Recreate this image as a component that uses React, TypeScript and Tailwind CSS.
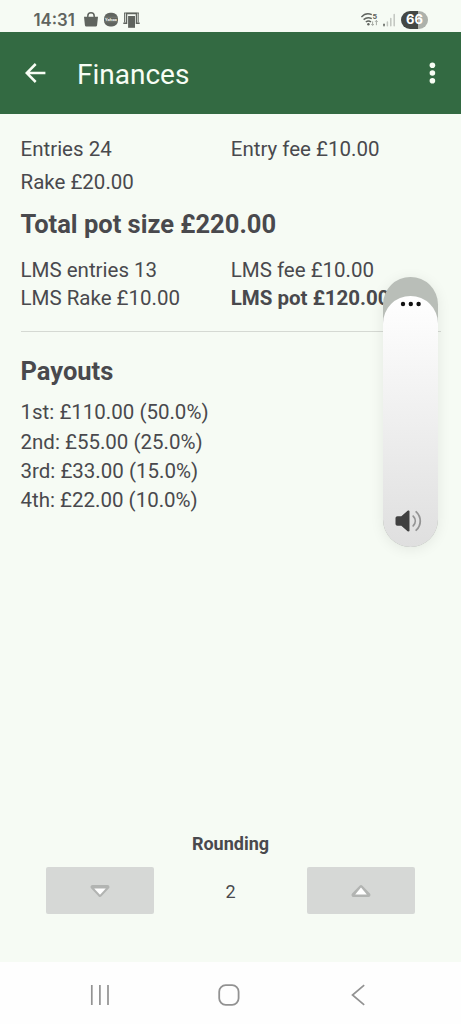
import { useState } from "react";

const payouts = [
  { place: "1st", amount: "£110.00", share: "50.0%" },
  { place: "2nd", amount: "£55.00", share: "25.0%" },
  { place: "3rd", amount: "£33.00", share: "15.0%" },
  { place: "4th", amount: "£22.00", share: "10.0%" },
];

function StatusBar() {
  return (
    <div className="flex h-8 shrink-0 items-center pt-[7px] pr-[33px] pl-[33.5px] text-[#60645f]">
      <span className="w-[50px] pt-px font-['Inter'] text-[16.8px] leading-none font-semibold whitespace-nowrap">14:31</span>
      <svg className="h-[15px] w-[14px]" viewBox="0 0 14 15">
        <path d="M3.8 5.5V4a3.2 3.2 0 0 1 6.4 0v1.5" fill="none" stroke="currentColor" strokeWidth="1.5" />
        <path d="M0 4.8h14l-.9 8.2c-.1 1-.8 1.6-1.8 1.6H2.7c-1 0-1.7-.6-1.8-1.6z" fill="currentColor" />
      </svg>
      <svg className="ml-[6px] h-[15px] w-[14px]" viewBox="0 0 14 15">
        <rect x="0" y="0.8" width="14" height="13.6" rx="6" fill="currentColor" />
        <path d="M.5 5.2h13M.5 9.8h13" stroke="#8c908b" strokeWidth=".5" />
        <text x="7" y="9" textAnchor="middle" fontSize="4.2" fontWeight="700" fontFamily="Roboto, sans-serif" fill="#f7fbf4">
          Yahoo
        </text>
      </svg>
      <svg className="ml-[5px] h-[16px] w-[17px]" viewBox="0 0 17 16">
        <path d="M.3 11.3h3.2V1.6h10v9.7h3.2" fill="none" stroke="currentColor" strokeWidth="1.5" />
        <path d="M1.5 1v9.5M15.3 1v9.5M1 1h15" stroke="currentColor" strokeWidth=".9" />
        <path d="M5.1 4h6.9v11.8H5.1z" fill="currentColor" />
      </svg>
      <div className="ml-auto flex items-center">
        <svg className="h-[15px] w-[18px]" viewBox="0 0 18 15" fill="none" stroke="currentColor">
          <path d="M.4 5C3.4 1.6 7.6 1.2 10.8 2.6M2.6 7.6C5 5.5 8 5.2 10.8 6.6M4.8 10c1.7-1.3 3.7-1.3 5.2.1" strokeWidth="1.4" />
          <circle cx="7.4" cy="12.2" r="1.2" fill="currentColor" stroke="none" />
          <path d="M11.6 9.4v4M10.3 12.1l1.3 1.3 1.3-1.3M15.4 13.2V8.4M14.1 9.8l1.3-1.4 1.3 1.4" stroke="#a5a9a3" strokeWidth="1" />
          <text x="11.4" y="7" fontSize="8" fontWeight="700" fontFamily="Roboto, sans-serif" fill="currentColor" stroke="none">
            5
          </text>
        </svg>
        <svg className="ml-[4px] h-[14px] w-[13px]" viewBox="0 0 13 14" strokeWidth="1.5" strokeLinecap="round">
          <path d="M1 11.2v1.5" stroke="currentColor" />
          <path d="M4.4 9v3.7M7.8 5.5v7.2M11.2 1.5v11.2" stroke="#c2c6c0" />
        </svg>
        <div className="ml-[5px] flex h-[18px] w-[27px] items-center justify-center rounded-full bg-linear-to-r from-[#444744] from-64% to-[#adb1ab] to-64% font-['Inter'] text-[13px] leading-none font-bold text-white">
          66
        </div>
      </div>
    </div>
  );
}

function AppBar() {
  return (
    <header className="flex h-[82px] shrink-0 items-center bg-[#336a42] pr-[25px] pl-[25px] text-[#f7fdf4]">
      <button aria-label="Back">
        <svg className="h-[20px] w-[21px]" viewBox="0 0 21 20" fill="none" stroke="currentColor" strokeWidth="2.5">
          <path d="M20.4 10H2M10.7 1 1.7 10l9 9" />
        </svg>
      </button>
      <h1 className="mt-[3px] ml-[31px] text-[28px] leading-none">Finances</h1>
      <button aria-label="More options" className="ml-auto">
        <svg className="h-[22px] w-[8px]" viewBox="0 0 8 22" fill="currentColor">
          <circle cx="4.4" cy="3.3" r="2.8" />
          <circle cx="4.4" cy="11" r="2.8" />
          <circle cx="4.4" cy="18.8" r="2.8" />
        </svg>
      </button>
    </header>
  );
}

function VolumeSlider() {
  return (
    <div className="absolute top-[277px] left-[383px] h-[270px] w-[55px] overflow-hidden rounded-full bg-[#b9beb8] shadow-[0_2px_14px_rgba(0,0,0,0.08)]">
      <div className="mt-[19px] flex h-[251px] flex-col items-center justify-between rounded-full bg-linear-to-b from-white to-[#dfdfdf] pt-[5px] pb-[15px]">
        <svg className="h-[6px] w-[22px]" viewBox="0 0 22 6" fill="#111">
          <circle cx="3" cy="3" r="2.2" />
          <circle cx="10.8" cy="3" r="2.2" />
          <circle cx="18.6" cy="3" r="2.2" />
        </svg>
        <svg className="mr-[4px] h-[22px] w-[28px]" viewBox="0 0 28 22">
          <path
            d="M2.5 6.2h3.8L12.6.8c.8-.6 1.9-.3 1.9.6v19.2c0 .9-1.1 1.2-1.9.6l-6.3-5.4H2.5c-1.2 0-2-.8-2-2V8.2c0-1.2.8-2 2-2z"
            fill="#404040"
          />
          <path d="M18.2 6.2c2.7 2.8 2.7 6.8 0 9.6M21.2 1.8c5.4 5 5.4 13.4 0 18.4" fill="none" stroke="#949494" strokeWidth="1.8" strokeLinecap="round" />
        </svg>
      </div>
    </div>
  );
}

function StepButton({ direction, onClick }: { direction: "down" | "up"; onClick: () => void }) {
  return (
    <button
      aria-label={direction === "down" ? "Decrease rounding" : "Increase rounding"}
      onClick={onClick}
      className="flex h-[47px] w-[108px] items-center justify-center rounded-[2px] bg-[#d6d8d6]"
    >
      {direction === "down" ? (
        <svg className="h-[16px] w-[22px]" viewBox="0 0 22 16">
          <path d="M3.5 4h15L11 12z" fill="#b2b4b2" stroke="#b2b4b2" strokeWidth="4" strokeLinejoin="round" />
          <path d="M5.2 5.6h11.6L11 11.8z" fill="#fff" />
        </svg>
      ) : (
        <svg className="h-[16px] w-[22px]" viewBox="0 0 22 16">
          <path d="M3.5 12h15L11 4.2z" fill="#b2b4b2" stroke="#b2b4b2" strokeWidth="4" strokeLinejoin="round" />
          <path d="M5.2 11.4h11.6L11 4.6z" fill="#fff" />
        </svg>
      )}
    </button>
  );
}

function NavBar() {
  return (
    <nav className="flex h-[62px] shrink-0 items-center bg-[#fefefe] pt-[4px] pr-[96px] pl-[90px] text-[#929292]">
      <svg className="h-[20px] w-[20px]" viewBox="0 0 20 20" stroke="currentColor" strokeWidth="1.7">
        <path d="M1.8 0v20M9.9 0v20M18 0v20" />
      </svg>
      <svg className="ml-[108px] h-[22px] w-[22px]" viewBox="0 0 22 22" fill="none" stroke="currentColor" strokeWidth="1.8">
        <rect x="1.2" y="1.2" width="19.4" height="19.6" rx="6.5" />
      </svg>
      <svg className="ml-auto h-[22px] w-[14px]" viewBox="0 0 14 22" fill="none" stroke="currentColor" strokeWidth="1.7">
        <path d="M13.2 1.2 1.5 11l11.7 9.8" />
      </svg>
    </nav>
  );
}

export default function App() {
  const [rounding, setRounding] = useState(2);

  return (
    <div className="relative flex h-[1024px] w-[461px] flex-col overflow-hidden bg-[#f6fbf4] font-['Roboto',sans-serif] text-[#49494d]">
      <StatusBar />
      <AppBar />

      <main className="flex flex-1 flex-col pr-[20px] pl-[20.5px] text-[20.5px]">
        <div className="mt-[19px] grid grid-cols-2 leading-[33px]">
          <span>Entries 24</span>
          <span>Entry fee £10.00</span>
          <span>Rake £20.00</span>
        </div>
        <h2 className="mt-[8px] text-[25.5px] leading-[34px] font-bold">Total pot size £220.00</h2>
        <div className="mt-[15px] grid grid-cols-2 leading-[28px] whitespace-nowrap">
          <span>LMS entries 13</span>
          <span>LMS fee £10.00</span>
          <span>LMS Rake £10.00</span>
          <span className="font-bold">LMS pot £120.00</span>
        </div>
        <hr className="mt-[19px] border-[#d5d9d3]" />

        <h2 className="mt-[22px] text-[25.5px] leading-[34px] font-bold">Payouts</h2>
        <ul className="mt-[10.1px] leading-[29.4px]">
          {payouts.map(({ place, amount, share }) => (
            <li key={place}>
              {place}: {amount} ({share})
            </li>
          ))}
        </ul>

        <div className="mt-auto mb-[48px] flex flex-col pr-[26px] pl-[25.5px] text-[18px]">
          <span className="text-center leading-[24px] font-bold">Rounding</span>
          <div className="mt-[11px] flex items-center justify-between">
            <StepButton direction="down" onClick={() => setRounding((n) => Math.max(0, n - 1))} />
            <span className="pt-[1px]">{rounding}</span>
            <StepButton direction="up" onClick={() => setRounding((n) => n + 1)} />
          </div>
        </div>
      </main>

      <NavBar />
      <VolumeSlider />
    </div>
  );
}
